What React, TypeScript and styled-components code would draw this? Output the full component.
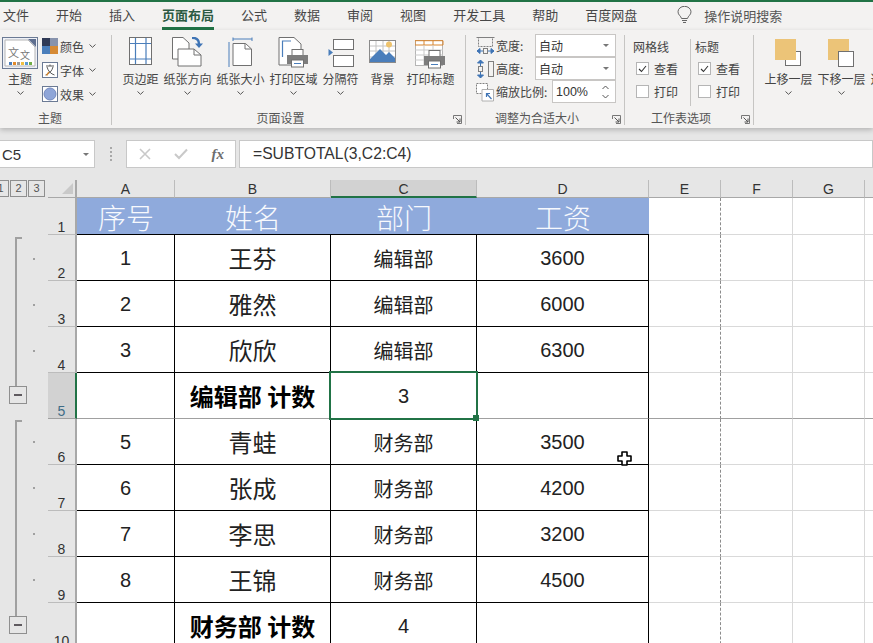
import React from 'react';
import styled, { createGlobalStyle } from 'styled-components';

const GlobalStyle = createGlobalStyle`
  html, body {
    margin: 0;
    padding: 0;
    overflow: hidden;
    background: #e6e6e6;
  }
  * {
    box-sizing: border-box;
  }
`;

const CJK = `"Noto Sans CJK SC", "Noto Sans", sans-serif`;
const LATIN = `"Liberation Sans", "Noto Sans CJK SC", sans-serif`;
const GREEN = '#217346';

const Page = styled.div`
  width: 873px;
  height: 643px;
  overflow: hidden;
  display: flex;
  flex-direction: column;
  font-family: ${CJK};
  color: #444;
`;

const TabBar = styled.div`
  height: 30px;
  flex: none;
  display: flex;
  gap: 27px;
  padding-left: 3px;
  background: #f3f2f1;
  border-top: 2px solid ${GREEN};
  position: relative;
  z-index: 2;
`;

const Tab = styled.div<{ $active?: boolean }>`
  height: 28px;
  line-height: 26px;
  font-size: 13px;
  white-space: nowrap;
  color: ${(p) => (p.$active ? '#2c5a43' : '#474747')};
  font-weight: ${(p) => (p.$active ? 700 : 400)};
  border-bottom: 3px solid ${(p) => (p.$active ? GREEN : 'transparent')};
`;

const SearchHint = styled.div`
  display: flex;
  align-items: center;
  height: 26px;
  gap: 12px;
  margin-left: 13px;
  font-size: 13px;
  color: #555;
  white-space: nowrap;
`;

const Ribbon = styled.div`
  height: 98px;
  flex: none;
  display: flex;
  padding: 5px 0 3px;
  background: #f3f2f1;
  box-shadow: 0 2px 5px rgba(0, 0, 0, 0.22);
  position: relative;
  z-index: 2;
`;

const Group = styled.div<{ $w?: number }>`
  width: ${(p) => (p.$w ? `${p.$w}px` : 'auto')};
  flex: none;
  position: relative;
  display: flex;
  flex-direction: column;
  border-right: 1px solid ${(p) => (p.$w ? '#c6c5c3' : 'transparent')};
`;

const GroupBody = styled.div<{ $pad?: number }>`
  flex: 1;
  min-height: 0;
  display: flex;
  padding: 2px 0 0 ${(p) => p.$pad ?? 0}px;
`;

const GroupLabel = styled.div<{ $end?: number }>`
  height: 16px;
  line-height: 17px;
  font-size: 12px;
  text-align: center;
  color: #555;
  padding-right: ${(p) => p.$end ?? 16}px;
`;

const Launcher = styled.svg`
  position: absolute;
  right: 3px;
  bottom: 1px;
  width: 9px;
  height: 9px;
`;

const BigButton = styled.div<{ $min?: number }>`
  display: flex;
  flex-direction: column;
  align-items: center;
  padding: 0 2.5px;
  min-width: ${(p) => p.$min ?? 0}px;
  font-size: 12px;
  color: #444;
  white-space: nowrap;
`;

const BigIcon = styled.div`
  height: 33px;
  display: flex;
  align-items: flex-start;
  justify-content: center;
`;

const BigText = styled.div`
  height: 16px;
  line-height: 16px;
  margin-top: 1px;
`;

const MoreArrow = styled.svg`
  width: 7px;
  height: 4px;
  margin-top: 4px;
  flex: none;
`;

const ThemeButton = styled(BigButton)`
  width: 36px;
  padding: 0;
  margin-right: 4px;
`;

const ThemeList = styled.div`
  display: flex;
  flex-direction: column;
  margin-top: -3px;
`;

const ThemeRow = styled.div`
  height: 24px;
  display: flex;
  align-items: center;
  gap: 2px;
  font-size: 12px;
  white-space: nowrap;
  ${MoreArrow} {
    margin: 0 0 0 3px;
  }
`;

const SizeList = styled.div`
  display: flex;
  flex-direction: column;
  margin-top: -3px;
  padding-left: 10px;
`;

const SizeRow = styled.div`
  height: 23px;
  display: flex;
  align-items: center;
  font-size: 12px;
  white-space: nowrap;
`;

const SizeIcon = styled.svg`
  width: 19px;
  height: 20px;
  flex: none;
  margin-right: 1px;
`;

const SizeName = styled.span<{ $w?: number }>`
  width: ${(p) => p.$w ?? 39}px;
  flex: none;
`;

const SelectBox = styled.div<{ $w: number }>`
  width: ${(p) => p.$w}px;
  height: 23px;
  background: #fff;
  border: 1px solid #c8c6c4;
  display: flex;
  align-items: center;
  justify-content: space-between;
  padding: 0 6px 0 3px;
  font-size: 12px;
  color: #333;
`;

const SpinValue = styled.span`
  font-family: ${LATIN};
  font-size: 12.5px;
`;

const SpinArrows = styled.svg`
  width: 7px;
  height: 16px;
  flex: none;
`;

const DownTriangle = styled.span`
  width: 0;
  height: 0;
  border-left: 3.5px solid transparent;
  border-right: 3.5px solid transparent;
  border-top: 3.5px solid #777;
`;

const OptionColumn = styled.div<{ $w: number; $rule?: boolean }>`
  width: ${(p) => p.$w}px;
  height: 67px;
  margin-top: 2px;
  padding-left: ${(p) => (p.$rule ? 4 : 7)}px;
  border-left: 1px solid ${(p) => (p.$rule ? '#c6c5c3' : 'transparent')};
  flex: none;
`;

const OptionTitle = styled.div`
  height: 18px;
  line-height: 15px;
  font-size: 12px;
`;

const OptionRow = styled.div`
  height: 23px;
  display: flex;
  align-items: center;
  gap: 5px;
  padding-left: 3px;
  font-size: 12px;
  white-space: nowrap;
`;

const CheckBox = styled.span`
  width: 13px;
  height: 13px;
  flex: none;
  background: #fff;
  border: 1px solid #b5b5b5;
  display: flex;
  align-items: center;
  justify-content: center;
`;

const FormulaRow = styled.div`
  height: 52px;
  flex: none;
  display: flex;
  align-items: flex-start;
  padding-top: 12px;
  background: #e6e6e6;
`;

const NameBox = styled.div`
  width: 96px;
  height: 28px;
  flex: none;
  margin-left: -1px;
  background: #fff;
  border: 1px solid #c8c8c8;
  display: flex;
  align-items: center;
  justify-content: space-between;
  padding: 0 5px 0 2px;
  font-family: ${LATIN};
  font-size: 15px;
  color: #333;
`;

const GripDots = styled.div`
  width: 31px;
  height: 28px;
  flex: none;
  display: flex;
  flex-direction: column;
  align-items: center;
  justify-content: center;
  gap: 2px;
`;

const GripDot = styled.span`
  width: 2px;
  height: 2px;
  background: #a8a8a8;
`;

const FxBox = styled.div`
  width: 110px;
  height: 28px;
  flex: none;
  background: #fff;
  border: 1px solid #c8c8c8;
  display: flex;
  align-items: center;
  justify-content: space-between;
  padding: 0 11px 0 12px;
`;

const FxGlyph = styled.span`
  font-family: "Liberation Serif", serif;
  font-style: italic;
  font-weight: 700;
  font-size: 15px;
  color: #6d6d6d;
`;

const FormulaInput = styled.div`
  flex: 1;
  height: 28px;
  margin-left: 3px;
  background: #fff;
  border: 1px solid #c8c8c8;
  line-height: 26px;
  padding-left: 13px;
  font-family: ${LATIN};
  font-size: 15.7px;
  color: #333;
`;

const Sheet = styled.div`
  position: relative;
  flex: none;
  display: grid;
  grid-template-columns: 48px 29px 98px 156px 146px 172px 72px 72px 72px 72px;
  grid-template-rows: 18px 37px repeat(9, 46px);
  background: #fff;
`;

const Gutter = styled.div`
  grid-column: 1;
  grid-row: 1 / 12;
  position: relative;
  background: #e6e6e6;
`;

const LevelRow = styled.div`
  display: flex;
  gap: 1px;
  margin-left: -8px;
`;

const LevelButton = styled.div`
  width: 17px;
  height: 17px;
  border: 1px solid #8f8f8f;
  font-family: ${LATIN};
  font-size: 11px;
  line-height: 15px;
  text-align: center;
  color: #555;
`;

const OutlineBar = styled.div<{ $top: number; $h: number }>`
  position: absolute;
  left: 15px;
  top: ${(p) => p.$top}px;
  width: 7px;
  height: ${(p) => p.$h}px;
  border-left: 2px solid #a0a0a0;
  border-top: 2px solid #a0a0a0;
`;

const CollapseBox = styled.div<{ $top: number }>`
  position: absolute;
  left: 9px;
  top: ${(p) => p.$top}px;
  width: 18px;
  height: 18px;
  background: #e6e6e6;
  border: 1px solid #8f8f8f;
  display: flex;
  align-items: center;
  justify-content: center;
  &::after {
    content: '';
    width: 8px;
    height: 2px;
    background: #5f5a5f;
  }
`;

const OutlineDot = styled.div<{ $top: number }>`
  position: absolute;
  left: 33px;
  top: ${(p) => p.$top}px;
  width: 2px;
  height: 2px;
  background: #a0a0a0;
`;

const Corner = styled.div`
  background: #e6e6e6;
  border-right: 2px solid #a8a8a8;
  border-bottom: 1px solid #a8a8a8;
  display: flex;
  justify-content: flex-end;
  align-items: flex-end;
  padding: 0 2px 3px 0;
`;

const CornerMark = styled.span`
  width: 0;
  height: 0;
  border-left: 11px solid transparent;
  border-bottom: 11px solid #c9c9c9;
`;

const ColHead = styled.div<{ $active?: boolean }>`
  background: ${(p) => (p.$active ? '#d2d2d2' : '#e6e6e6')};
  border-right: 1px solid #bcbcbc;
  border-bottom: ${(p) => (p.$active ? `2px solid ${GREEN}` : '1px solid #a8a8a8')};
  font-family: ${LATIN};
  font-size: 14px;
  line-height: 19px;
  text-align: center;
  color: #333;
`;

const RowHead = styled.div<{ $active?: boolean }>`
  background: ${(p) => (p.$active ? '#d2d2d2' : '#e6e6e6')};
  border-right: 2px solid ${(p) => (p.$active ? GREEN : '#a8a8a8')};
  border-bottom: 1px solid ${(p) => (p.$active ? '#a0a0a0' : '#bcbcbc')};
  display: flex;
  align-items: flex-end;
  justify-content: center;
  font-family: ${LATIN};
  font-size: 14px;
  line-height: 14px;
  color: ${(p) => (p.$active ? '#3f6c86' : '#333')};
`;

const HeaderCell = styled.div`
  background: #8faadc;
  border-bottom: 1px solid #000;
  display: flex;
  align-items: center;
  justify-content: center;
  padding-top: 2px;
  font-family: ${CJK};
  font-size: 28px;
  font-weight: 300;
  color: #f7f9fd;
`;

const Cell = styled.div<{ $bold?: boolean; $soft?: boolean; $name?: boolean; $num?: boolean }>`
  position: relative;
  border-right: 1px solid #000;
  border-bottom: 1px solid ${(p) => (p.$soft ? '#a0a0a0' : '#000')};
  display: flex;
  align-items: center;
  justify-content: center;
  padding-top: ${(p) => (p.$name ? 0 : 2)}px;
  white-space: pre;
  font-family: ${(p) => (p.$num ? LATIN : CJK)};
  font-size: ${(p) => (p.$name ? 24 : 20)}px;
  font-weight: ${(p) => (p.$bold ? 700 : 400)};
  color: ${(p) => (p.$bold ? '#000' : '#222')};
`;

const BlankCell = styled.div<{ $soft?: boolean; $dashed?: boolean }>`
  background: #fff;
  border-right: ${(p) => (p.$dashed ? '1px dashed #8c8c8c' : '1px solid #d9d9d9')};
  border-bottom: 1px solid ${(p) => (p.$soft ? '#a0a0a0' : '#d9d9d9')};
`;

const Selection = styled.div`
  position: absolute;
  left: -2px;
  top: -2px;
  right: -2px;
  bottom: -2px;
  border: 2px solid ${GREEN};
  z-index: 3;
  &::after {
    content: '';
    position: absolute;
    right: -3px;
    bottom: -3px;
    width: 6px;
    height: 6px;
    background: ${GREEN};
  }
`;

const CrossCursor = styled.svg`
  position: absolute;
  left: 617px;
  top: 271px;
  width: 15px;
  height: 15px;
  z-index: 4;
`;

const Chevron = () => (
  <MoreArrow viewBox="0 0 7 4">
    <path d="M.5.5 3.5 3.3 6.5.5" fill="none" stroke="#555" strokeWidth="1" />
  </MoreArrow>
);

const Corners = () => (
  <Launcher viewBox="0 0 9 9">
    <path d="M.5 4V.5H8.5" fill="none" stroke="#777" />
    <path d="M8.5.5V8.5H4" fill="none" stroke="#777" />
    <path d="M2.5 2.5 7 7M7 3.5V7H3.5" fill="none" stroke="#555" />
  </Launcher>
);

const Printer = ({ x, y }: { x: number; y: number }) => (
  <g transform={`translate(${x} ${y})`}>
    <rect x="5" y="0.5" width="11" height="6" fill="#fff" stroke="#707070" />
    <rect x="0" y="6" width="21" height="9" fill="#7d7d7d" />
    <rect x="4.5" y="11" width="12" height="7" fill="#fff" stroke="#707070" />
    <path d="M7 14.5h7" stroke="#4a7ebb" />
  </g>
);

const ThemeIcon = () => (
  <svg width="36" height="32" viewBox="0 0 36 32">
    <rect x=".5" y=".5" width="35" height="31" fill="#eef1f7" stroke="#6b7a94" />
    <path d="M3 3H26L33 10V29H3Z" fill="#fff" stroke="#b5b5b5" />
    <path d="M26 2 34 2 34 10Z" fill="#5f6f8f" />
    <text x="6" y="20" fontSize="11" fill="#777" fontFamily={CJK}>文</text>
    <text x="18" y="22" fontSize="10" fill="#777" fontFamily={CJK}>文</text>
    {['#4a7ebb', '#e08a2e', '#9a9a9a', '#f0c040', '#5b9bd5', '#70ad47'].map((c, i) => (
      <rect key={c} x={7 + i * 4} y="25" width="3" height="3" fill={c} />
    ))}
  </svg>
);

const ColorsIcon = () => (
  <svg width="16" height="16" viewBox="0 0 16 16">
    <rect width="8" height="8" fill="#2f3a56" />
    <rect x="8" width="8" height="8" fill="#8793ad" />
    <rect y="8" width="8" height="8" fill="#4a7ebb" />
    <rect x="8" y="8" width="8" height="8" fill="#d68a35" />
  </svg>
);

const FontsIcon = () => (
  <svg width="16" height="16" viewBox="0 0 16 16">
    <rect x=".5" y=".5" width="15" height="15" fill="#fff" stroke="#6b7a94" />
    <path d="M4 4H12M8 2.5V4M5 5C6 9 9 12 12.5 13M11 5C10 9 7 12 3.5 13" fill="none" stroke="#5a5a5a" />
    <path d="M4.5 13.5 7 10" stroke="#d68a35" strokeWidth="1.4" />
  </svg>
);

const EffectsIcon = () => (
  <svg width="16" height="16" viewBox="0 0 16 16">
    <rect x=".5" y=".5" width="15" height="15" fill="#fff" stroke="#6b7a94" />
    <circle cx="8" cy="8" r="6" fill="#8ea5d8" stroke="#7388bd" />
  </svg>
);

const MarginsIcon = () => (
  <svg width="24" height="30" viewBox="0 0 24 30">
    <rect x=".5" y=".5" width="22" height="27" fill="#fff" stroke="#707070" />
    <path d="M6.5 1V27M17 1V27M1 6.5H22M1 22H22" stroke="#4a7ebb" strokeWidth="1.2" />
  </svg>
);

const OrientationIcon = () => (
  <svg width="32" height="32" viewBox="0 0 32 32">
    <path d="M.5.5H11L17 6V22H.5Z" fill="#fff" stroke="#707070" />
    <path d="M6 12H22L29 18V29H6Z" fill="#fff" stroke="#707070" />
    <path d="M22 12V18H29" fill="none" stroke="#707070" />
    <path d="M20 .8C24 .8 27 2.5 27 7" fill="none" stroke="#3f74b5" strokeWidth="2.4" />
    <path d="M23 6.5H31L27 11Z" fill="#3f74b5" />
  </svg>
);

const PaperSizeIcon = () => (
  <svg width="25" height="32" viewBox="0 0 25 32">
    <path d="M1 5V30M5 .5V4M24 .5V4M5 2H24" fill="none" stroke="#4a7ebb" />
    <path d="M5.5 5.5H18L24 11V27.5H5.5Z" fill="#fff" stroke="#707070" transform="translate(-.5 1)" />
    <path d="M17 6.5V12H23.5" fill="none" stroke="#707070" />
  </svg>
);

const PrintAreaIcon = () => (
  <svg width="32" height="32" viewBox="0 0 32 32">
    <path d="M1 .5H16L23 7V28H1Z" fill="#fff" stroke="#707070" />
    <path d="M4.5 20V4H13" fill="none" stroke="#4a7ebb" strokeWidth="1.2" />
    <Printer x={9} y={12} />
  </svg>
);

const BreaksIcon = () => (
  <svg width="26" height="31" viewBox="0 0 26 31">
    <rect x="5.5" y="2.5" width="20" height="10" fill="#fff" stroke="#707070" />
    <rect x="5.5" y="18.5" width="20" height="11" fill="#fff" stroke="#707070" />
    <path d="M.5 12 5 15.5 .5 19Z" fill="#4a7ebb" />
  </svg>
);

const BackgroundIcon = () => (
  <svg width="27" height="26" viewBox="0 0 27 26">
    <rect x=".5" y="3.5" width="26" height="22" fill="#fff" stroke="#8a8a8a" />
    <path d="M7 4V25M14 4V25M20 4V25M1 9H26M1 14H26M1 20H26" stroke="#c4c4c4" />
    <circle cx="20" cy="7.5" r="3" fill="#eec36d" />
    <path d="M1 22 11 12 17 18 20 15 26 21V25H1Z" fill="#4a7ebb" />
  </svg>
);

const TitlesIcon = () => (
  <svg width="31" height="33" viewBox="0 -3 31 33">
    <rect x=".5" y=".5" width="27" height="25" fill="#fff" stroke="#b5b5b5" />
    <path d="M0 .7H28V5H0ZM9 .5V5M18 .5V5" fill="none" stroke="#d8842c" />
    <path d="M0 10H28M0 15H28M0 20H28M9 5V25M18 5V25" stroke="#c9c9c9" />
    <Printer x={9} y={10} />
  </svg>
);

const LayerIcon = ({ front }: { front?: boolean }) => (
  <svg width="27" height="30" viewBox="0 -2 27 30">
    {!front && <rect x="10.5" y="12.5" width="15" height="14" fill="#fff" stroke="#707070" />}
    <rect width="21" height="21" fill="#ecc478" />
    {front && <rect x="10.5" y="12.5" width="15" height="15" fill="#fff" stroke="#707070" />}
  </svg>
);

const WidthIcon = () => (
  <SizeIcon viewBox="0 0 19 20">
    <rect x="2.5" y="1.5" width="14" height="9" fill="none" stroke="#808080" strokeDasharray="2 1" />
    <path d="M.5 1.5H18.5" stroke="#808080" />
    <path d="M1 15H18M1 15l3-2.5v5zM18 15l-3-2.5v5z" fill="#3f74b5" stroke="#3f74b5" />
    <rect x="7.5" y="12.5" width="4" height="5" fill="#f3f2f1" stroke="#808080" />
  </SizeIcon>
);

const HeightIcon = () => (
  <SizeIcon viewBox="0 0 19 20">
    <path d="M4.5 1V19M4.5 1l-3 3h6zM4.5 19l-3-3h6z" fill="#3f74b5" stroke="#3f74b5" />
    <rect x="2.5" y="7.5" width="4" height="5" fill="#f3f2f1" stroke="#808080" />
    <rect x="12.5" y="2.5" width="5" height="15" fill="none" stroke="#808080" />
  </SizeIcon>
);

const ScaleIcon = () => (
  <SizeIcon viewBox="0 0 19 20">
    <rect x=".5" y="1.5" width="11" height="10" fill="#fff" stroke="#808080" strokeDasharray="2 1" />
    <path d="M6 7.5H17.5V19H6Z" fill="#fff" stroke="#b0b0b0" />
    <path d="M15.5 17 10.5 11.5M10.5 15V11.5H14" fill="none" stroke="#3f74b5" strokeWidth="1.2" />
  </SizeIcon>
);

const pageButtons = [
  { text: '页边距', icon: <MarginsIcon /> },
  { text: '纸张方向', icon: <OrientationIcon /> },
  { text: '纸张大小', icon: <PaperSizeIcon /> },
  { text: '打印区域', icon: <PrintAreaIcon /> },
  { text: '分隔符', icon: <BreaksIcon /> },
  { text: '背景', icon: <BackgroundIcon />, min: 43, noArrow: true },
  { text: '打印标题', icon: <TitlesIcon />, noArrow: true },
];

const tabs = ['文件', '开始', '插入', '页面布局', '公式', '数据', '审阅', '视图', '开发工具', '帮助', '百度网盘'];
const columns = ['A', 'B', 'C', 'D', 'E', 'F', 'G', 'H'];
const titles = ['序号', '姓名', '部门', '工资'];

type Row = { no: string; name: string; dept: string; pay: string; total?: boolean };

const rows: Row[] = [
  { no: '1', name: '王芬', dept: '编辑部', pay: '3600' },
  { no: '2', name: '雅然', dept: '编辑部', pay: '6000' },
  { no: '3', name: '欣欣', dept: '编辑部', pay: '6300' },
  { no: '', name: '编辑部 计数', dept: '3', pay: '', total: true },
  { no: '5', name: '青蛙', dept: '财务部', pay: '3500' },
  { no: '6', name: '张成', dept: '财务部', pay: '4200' },
  { no: '7', name: '李思', dept: '财务部', pay: '3200' },
  { no: '8', name: '王锦', dept: '财务部', pay: '4500' },
  { no: '', name: '财务部 计数', dept: '4', pay: '', total: true },
];

const dotRows = [258, 304, 350, 441, 487, 533, 579];

const OptionGroup = ({ title, rule, width }: { title: string; rule?: boolean; width: number }) => (
  <OptionColumn $w={width} $rule={rule}>
    <OptionTitle>{title}</OptionTitle>
    <OptionRow>
      <CheckBox>
        <svg width="9" height="8" viewBox="0 0 9 8">
          <path d="M1 4 3.5 6.5 8 1" fill="none" stroke="#333" strokeWidth="1.1" />
        </svg>
      </CheckBox>
      查看
    </OptionRow>
    <OptionRow>
      <CheckBox />
      打印
    </OptionRow>
  </OptionColumn>
);

const SpareCells = ({ soft }: { soft?: boolean }) => (
  <>
    <BlankCell $soft={soft} $dashed />
    <BlankCell $soft={soft} />
    <BlankCell $soft={soft} />
    <BlankCell $soft={soft} />
  </>
);

export default function App() {
  return (
    <Page>
      <GlobalStyle />
      <TabBar>
        {tabs.map((t) => (
          <Tab key={t} $active={t === '页面布局'}>
            {t}
          </Tab>
        ))}
        <SearchHint>
          <svg width="15" height="18" viewBox="0 0 15 18">
            <path
              d="M4.5 12.5C4 10 1 9 1 5.8A6.3 5.3 0 0 1 14 5.8C14 9 11 10 10.5 12.5ZM5 14.5H10M6 16.5H9"
              fill="none"
              stroke="#666"
            />
          </svg>
          操作说明搜索
        </SearchHint>
      </TabBar>

      <Ribbon>
        <Group $w={112}>
          <GroupBody $pad={2}>
            <ThemeButton>
              <BigIcon>
                <ThemeIcon />
              </BigIcon>
              <BigText>主题</BigText>
              <Chevron />
            </ThemeButton>
            <ThemeList>
              <ThemeRow>
                <ColorsIcon /> 颜色 <Chevron />
              </ThemeRow>
              <ThemeRow>
                <FontsIcon /> 字体 <Chevron />
              </ThemeRow>
              <ThemeRow>
                <EffectsIcon /> 效果 <Chevron />
              </ThemeRow>
            </ThemeList>
          </GroupBody>
          <GroupLabel $end={11}>主题</GroupLabel>
        </Group>

        <Group $w={354}>
          <GroupBody $pad={8}>
            {pageButtons.map((b) => (
              <BigButton key={b.text} $min={b.min}>
                <BigIcon>{b.icon}</BigIcon>
                <BigText>{b.text}</BigText>
                {!b.noArrow && <Chevron />}
              </BigButton>
            ))}
          </GroupBody>
          <GroupLabel>页面设置</GroupLabel>
          <Corners />
        </Group>

        <Group $w={159}>
          <GroupBody>
            <SizeList>
              <SizeRow>
                <WidthIcon />
                <SizeName>宽度:</SizeName>
                <SelectBox $w={81}>
                  自动
                  <DownTriangle />
                </SelectBox>
              </SizeRow>
              <SizeRow>
                <HeightIcon />
                <SizeName>高度:</SizeName>
                <SelectBox $w={81}>
                  自动
                  <DownTriangle />
                </SelectBox>
              </SizeRow>
              <SizeRow>
                <ScaleIcon />
                <SizeName $w={56}>缩放比例:</SizeName>
                <SelectBox $w={64}>
                  <SpinValue>100%</SpinValue>
                  <SpinArrows viewBox="0 0 7 16">
                    <path d="M.5 5 3.5 2 6.5 5M.5 11 3.5 14 6.5 11" fill="none" stroke="#555" />
                  </SpinArrows>
                </SelectBox>
              </SizeRow>
            </SizeList>
          </GroupBody>
          <GroupLabel>调整为合适大小</GroupLabel>
          <Corners />
        </Group>

        <Group $w={129}>
          <GroupBody>
            <OptionGroup title="网格线" width={65} />
            <OptionGroup title="标题" width={60} rule />
          </GroupBody>
          <GroupLabel>工作表选项</GroupLabel>
          <Corners />
        </Group>

        <Group>
          <GroupBody $pad={8}>
            <BigButton>
              <BigIcon>
                <LayerIcon />
              </BigIcon>
              <BigText>上移一层</BigText>
              <Chevron />
            </BigButton>
            <BigButton>
              <BigIcon>
                <LayerIcon front />
              </BigIcon>
              <BigText>下移一层</BigText>
              <Chevron />
            </BigButton>
            <BigButton>
              <BigIcon />
              <BigText>选择窗格</BigText>
            </BigButton>
          </GroupBody>
        </Group>
      </Ribbon>

      <FormulaRow>
        <NameBox>
          C5
          <DownTriangle />
        </NameBox>
        <GripDots>
          <GripDot />
          <GripDot />
          <GripDot />
          <GripDot />
        </GripDots>
        <FxBox>
          <svg width="12" height="12" viewBox="0 0 12 12">
            <path d="M1 1 11 11M11 1 1 11" stroke="#c9c9c9" strokeWidth="1.6" />
          </svg>
          <svg width="14" height="12" viewBox="0 0 14 12">
            <path d="M1 6 5 10 13 1.5" fill="none" stroke="#c9c9c9" strokeWidth="2" />
          </svg>
          <FxGlyph>fx</FxGlyph>
        </FxBox>
        <FormulaInput>=SUBTOTAL(3,C2:C4)</FormulaInput>
      </FormulaRow>

      <Sheet>
        <Gutter>
          <LevelRow>
            <LevelButton>1</LevelButton>
            <LevelButton>2</LevelButton>
            <LevelButton>3</LevelButton>
          </LevelRow>
          <OutlineBar $top={57} $h={150} />
          <CollapseBox $top={206} />
          <OutlineBar $top={240} $h={197} />
          <CollapseBox $top={436} />
          {dotRows.map((y) => (
            <OutlineDot key={y} $top={y - 180} />
          ))}
        </Gutter>

        <Corner>
          <CornerMark />
        </Corner>
        {columns.map((c) => (
          <ColHead key={c} $active={c === 'C'}>
            {c}
          </ColHead>
        ))}

        <RowHead>1</RowHead>
        {titles.map((t) => (
          <HeaderCell key={t}>{t}</HeaderCell>
        ))}
        <SpareCells />

        {rows.map((r, i) => {
          const selected = i === 3;
          return (
            <React.Fragment key={i}>
              <RowHead $active={selected}>{i + 2}</RowHead>
              <Cell $num $soft={selected}>{r.no}</Cell>
              <Cell $bold={r.total} $name $soft={selected}>
                {r.name}
              </Cell>
              <Cell $num={r.total} $soft={selected}>
                {r.dept}
                {selected && <Selection />}
              </Cell>
              <Cell $num $soft={selected}>{r.pay}</Cell>
              <SpareCells soft={selected} />
            </React.Fragment>
          );
        })}

        <CrossCursor viewBox="0 0 15 15">
          <path
            d="M5 1H10V5H14V10H10V14H5V10H1V5H5Z"
            fill="#fff"
            stroke="#000"
            strokeWidth="1.6"
            strokeLinejoin="round"
          />
        </CrossCursor>
      </Sheet>
    </Page>
  );
}
